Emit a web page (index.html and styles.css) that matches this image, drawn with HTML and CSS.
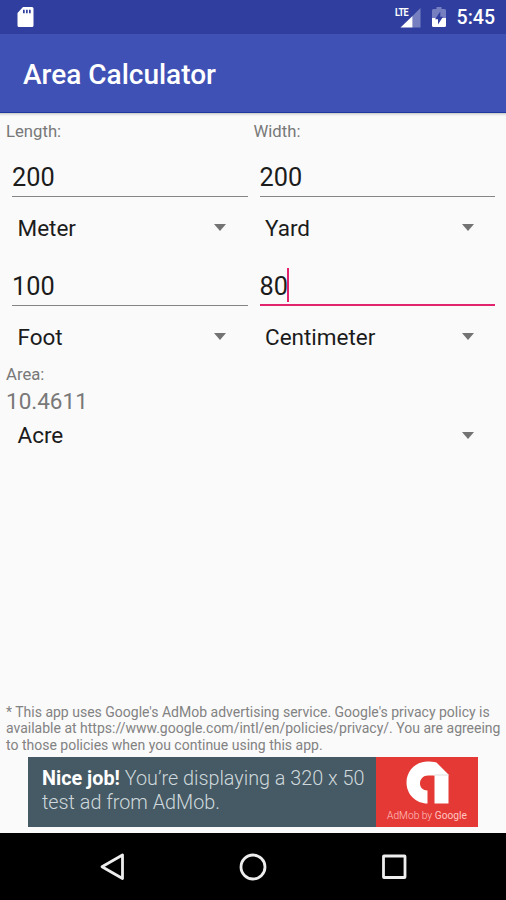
FILE: index.html
```html
<!DOCTYPE html>
<html lang="en">
<head>
<meta charset="utf-8">
<title>Area Calculator</title>
<link rel="stylesheet" href="styles.css">
</head>
<body>
<div class="screen">
  <header class="status">
    <svg class="sd" width="17" height="21" viewBox="0 0 17 21"><path fill="#fff" fill-rule="evenodd" d="M6 0H15Q16.500 0 16.500 1.500V18.500Q16.500 20 15 20H2Q.5 20 .5 18.500V6ZM6 2.800V6.200H7.700V2.800ZM9 2.800V6.200H10.700V2.800ZM12 2.800V6.200H13.700V2.800Z"/></svg>
    <div class="status-right">
      <div class="signal"><span class="lte">LTE</span>
        <svg width="22" height="21" viewBox="0 0 22 21"><path fill="#7680c0" d="M21.500 0V19.500H13.500V8Z"/><path fill="#fff" d="M13.500 8V19.500H1.500Z"/></svg>
      </div>
      <svg class="battery" width="14" height="21" viewBox="0 0 14 21"><path fill="#7680c0" d="M4.500 0H9.500V2H12.500Q14 2 14 3.500V11H0V3.500Q0 2 1.500 2H4.500Z"/><path fill="#fff" d="M0 11H14V18.500Q14 20 12.500 20H1.500Q0 20 0 18.500Z"/><path fill="#303f9f" d="M8.300 4.500V9.800H11L6 17.500V12.200H3Z"/></svg>
      <span class="clock">5:45</span>
    </div>
  </header>
  <div class="appbar"><h1>Area Calculator</h1></div>
  <main>
    <div class="columns">
      <section class="column">
        <div class="label">Length:</div>
        <div class="field">200</div>
        <div class="spinner">Meter<i class="arrow"></i></div>
        <div class="field">100</div>
        <div class="spinner">Foot<i class="arrow"></i></div>
      </section>
      <section class="column">
        <div class="label">Width:</div>
        <div class="field">200</div>
        <div class="spinner">Yard<i class="arrow"></i></div>
        <div class="field focused">80<i class="caret"></i></div>
        <div class="spinner">Centimeter<i class="arrow"></i></div>
      </section>
    </div>
    <div class="area-label">Area:</div>
    <div class="area-value">10.4611</div>
    <div class="spinner area-unit">Acre<i class="arrow"></i></div>
    <div class="bottom">
      <p class="notice">* This app uses Google's AdMob advertising service. Google's privacy policy is<br>available at https://www.google.com/intl/en/policies/privacy/. You are agreeing<br>to those policies when you continue using this app.</p>
      <div class="ad">
        <div class="ad-text"><b>Nice job!</b> You’re displaying a 320 x 50<br>test ad from AdMob.</div>
        <div class="ad-logo">
          <svg width="43" height="43" viewBox="0 0 43 43"><path fill="#fff" d="M21.500 42.500V29.500C17 29.500 14 26.500 14 22.500C14 18 17.500 14.500 22 14.500H28.500V42.500H42.500V13.500L30.500 1.500C27.500 .5 24 .5 21.500 .5C9.500 .5 .5 10 .5 21.500C.5 33.500 10 42.500 21.500 42.500Z"/><path fill="#ddd" d="M28.500 13.500H42.500V14.500H28.500Z"/></svg>
          <span><em>AdMob by</em> Google</span>
        </div>
      </div>
    </div>
  </main>
  <nav>
    <svg width="26" height="28" viewBox="0 0 26 28"><path d="M23.500 2V25.500L3 13.750Z"/></svg>
    <svg width="28" height="28" viewBox="0 0 28 28"><circle cx="14" cy="14" r="12"/></svg>
    <svg width="26" height="28" viewBox="0 0 26 28"><rect x="2.500" y="3" width="21.500" height="21.500" rx=".5"/></svg>
  </nav>
</div>
</body>
</html>
```
FILE: styles.css
```css
* { box-sizing: border-box; }
body { margin: 0; font-family: Roboto, sans-serif; background: #fafafa; }
.screen { width: 506px; height: 900px; display: flex; flex-direction: column; overflow: hidden; }
.status { height: 34px; background: #303f9f; display: flex; justify-content: space-between; padding: 7px 11px 0 17px; }
.status svg { display: block; }
.status-right { display: flex; }
.signal { position: relative; margin-right: 11px; }
.signal svg { margin-top: 1px; }
.lte { position: absolute; left: -4px; top: 1px; font-size: 11px; line-height: 9px; font-weight: 700; letter-spacing: -.6px; color: #fff; transform: scaleX(.82); transform-origin: left; }
.battery { margin-right: 11px; }
.clock { color: #fff; font-size: 19.500px; line-height: 22px; font-weight: 500; }
.appbar { height: 79px; background: #3f51b5; display: flex; align-items: center; padding: 3px 0 0 23px; border-bottom: 1px solid #1e38a0; }
h1 { margin: 0; color: #fff; font-size: 28px; line-height: 34px; font-weight: 500; }
main { flex: 1; display: flex; flex-direction: column; padding-left: 6px; box-shadow: inset 0 4px 3px -3px #bbb; color: #1c1c1c; }
.columns { display: grid; grid-template-columns: 247.500px 247.500px; }
.label, .area-label { font-size: 16.700px; color: #787878; line-height: 20px; }
.label { height: 36px; padding-top: 9px; }
.field { height: 48px; margin: 0 6px; border-bottom: 1px solid #858585; padding-top: 14px; font-size: 25.300px; line-height: 30px; display: flex; }
.focused { border-bottom: 2px solid #e2246e; }
.caret { width: 2.500px; height: 34px; margin: -4px 0 0 -1px; background: #e2246e; }
.spinner { height: 61px; padding: 0 27.500px 0 11.500px; display: flex; align-items: center; justify-content: space-between; font-size: 22.500px; line-height: 28px; }
.arrow { border: 6.500px solid transparent; border-top: 7px solid #737373; border-bottom: 0; }
.area-label { margin-top: -2px; }
.area-value { font-size: 22.500px; line-height: 28px; color: #787878; margin-top: 2px; }
.area-unit { height: 40px; width: 495px; }
.bottom { margin-top: auto; padding-bottom: 6px; }
.notice { margin: 0 0 4px; font-size: 14px; line-height: 16.500px; color: #828282; white-space: nowrap; }
.ad { display: flex; width: 450px; height: 70px; margin-left: 22px; }
.ad-text { flex: 1; background: #455a64; color: #cfd8dc; padding: 10px 0 0 14px; font-size: 19.800px; line-height: 23.500px; font-weight: 300; white-space: nowrap; }
.ad-text b { color: #fff; font-weight: 700; }
.ad-logo { width: 102px; background: #e53935; display: flex; flex-direction: column; align-items: center; padding-top: 4px; color: #ffc5c0; font-size: 10.200px; line-height: 16px; }
.ad-logo svg { display: block; margin-bottom: 4px; }
.ad-logo em { font-style: normal; font-weight: 300; }
nav { height: 67px; background: #000; display: flex; justify-content: center; gap: 114px; align-items: center; }
nav svg { fill: none; stroke: #eee; stroke-width: 2.800; stroke-linejoin: round; }
```
